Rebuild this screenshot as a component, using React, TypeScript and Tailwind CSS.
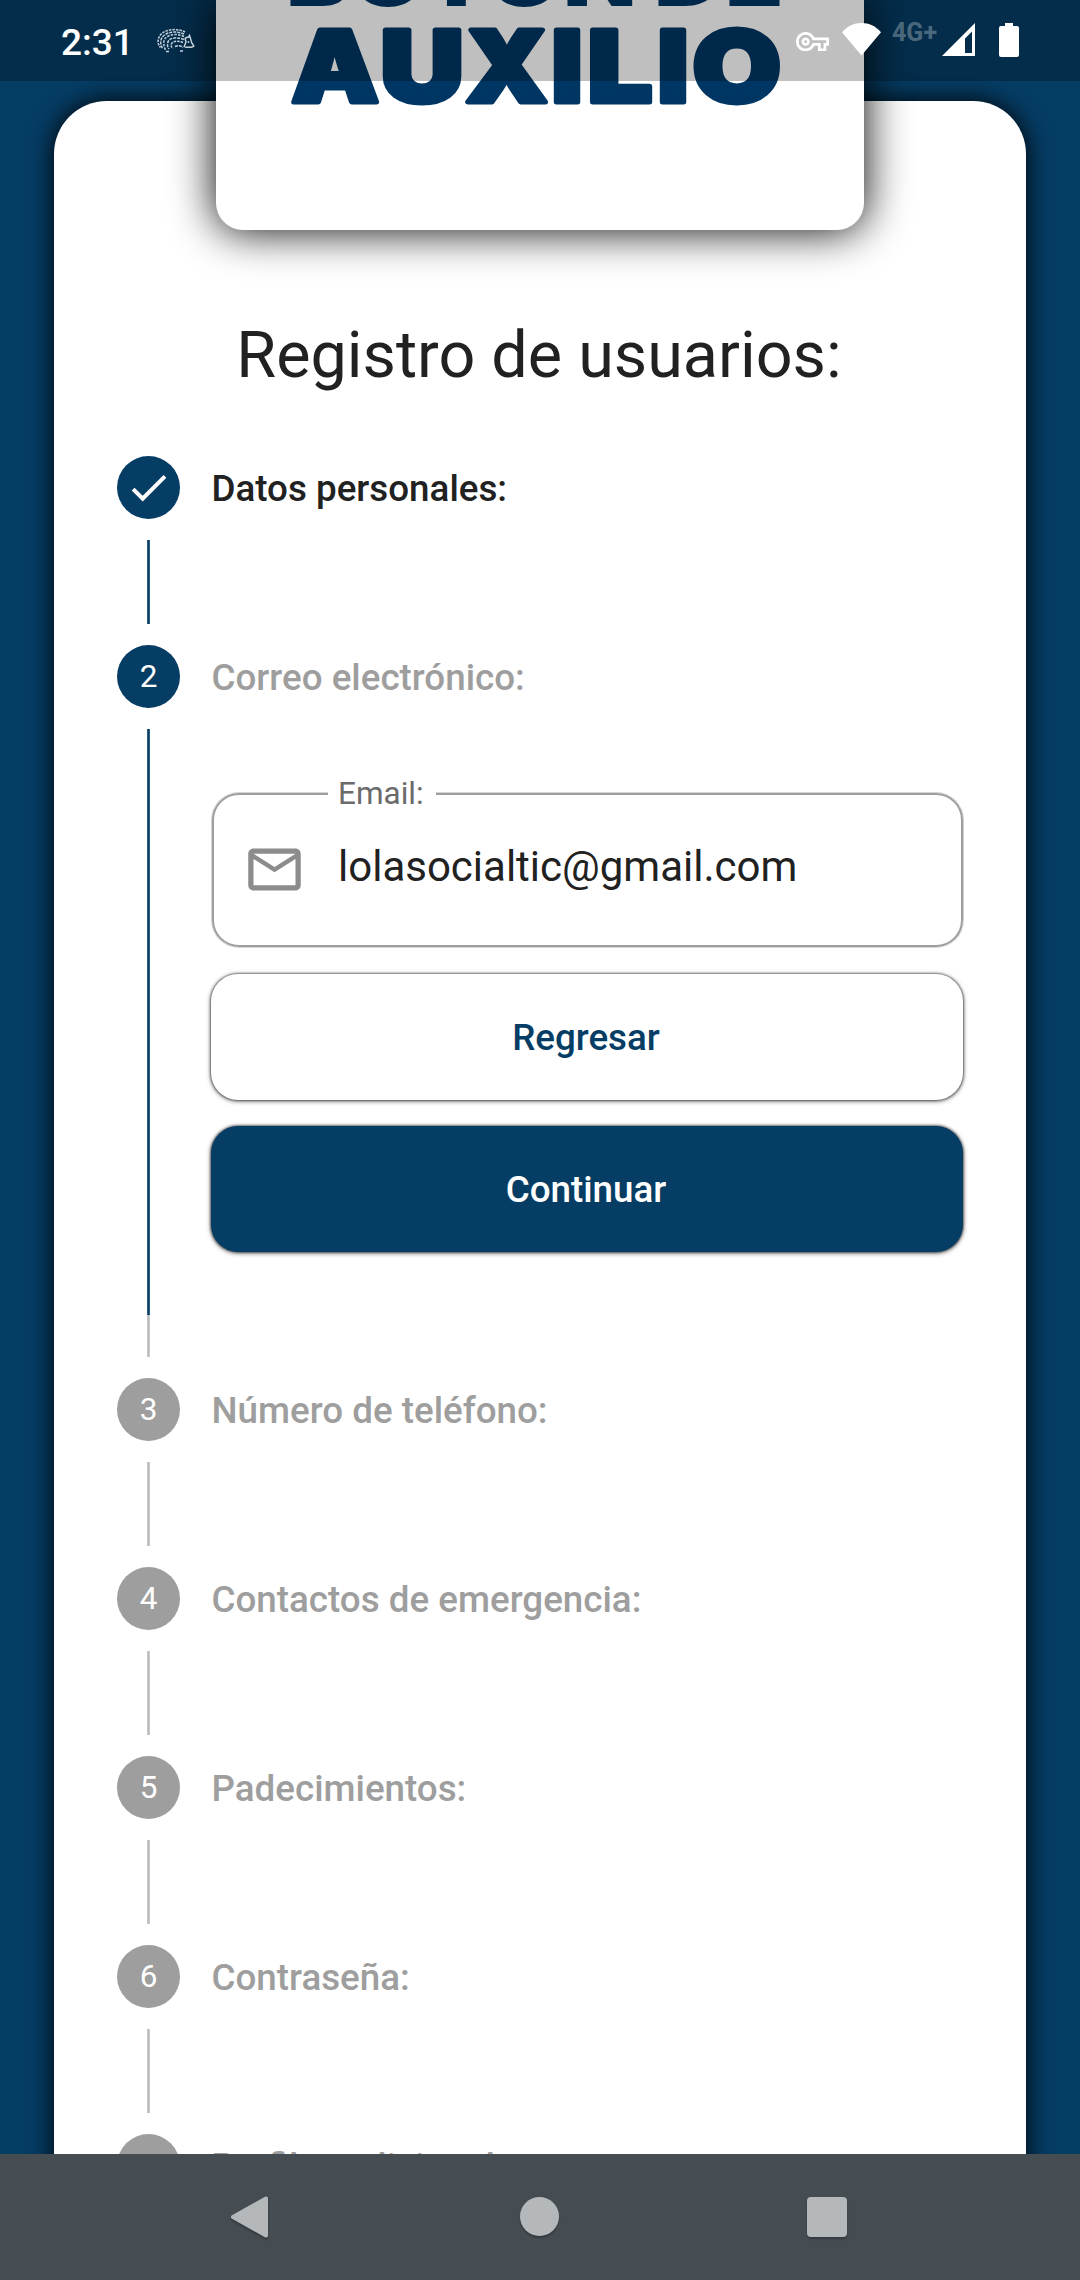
type StepState = "done" | "active" | "pending";

const steps: { n: number; label: string; state: StepState }[] = [
  { n: 1, label: "Datos personales:", state: "done" },
  { n: 2, label: "Correo electrónico:", state: "active" },
  { n: 3, label: "Número de teléfono:", state: "pending" },
  { n: 4, label: "Contactos de emergencia:", state: "pending" },
  { n: 5, label: "Padecimientos:", state: "pending" },
  { n: 6, label: "Contraseña:", state: "pending" },
  { n: 7, label: "Perfiles adicionales:", state: "pending" },
];

const topWord = [
  { ch: "B", x: 70, s: 1.1 },
  { ch: "O", x: 134, s: 1.13 },
  { ch: "T", x: 207.5, s: 1.1 },
  { ch: "Ó", x: 270.3, s: 1.13 },
  { ch: "N", x: 347, s: 1.1 },
  { ch: "D", x: 438, s: 1.1 },
  { ch: "E", x: 509, s: 1.1 },
];

const wordmark = [
  { ch: "A", x: 75.6, s: 1.11 },
  { ch: "U", x: 164.2, s: 1.17 },
  { ch: "X", x: 249.5, s: 1.056 },
  { ch: "I", x: 335.4, s: 1.078 },
  { ch: "L", x: 371.6, s: 1.16 },
  { ch: "I", x: 441.4, s: 1.078 },
  { ch: "O", x: 476.4, s: 1.153 },
];

function Logo() {
  return (
    <svg width="648" height="230" viewBox="0 0 648 230" className="block fill-[#003663] font-['Inter',sans-serif] font-black">
      {topWord.map((l, i) => (
        <text key={i} transform={`translate(${l.x} 6) scale(${l.s} 1)`} className="text-[87px]">
          {l.ch}
        </text>
      ))}
      {wordmark.map((l, i) => (
        <text
          key={i}
          transform={`translate(${l.x} 102) scale(${l.s} 1)`}
          strokeWidth="5"
          strokeLinejoin="round"
          className="stroke-[#003663] text-[99px]"
        >
          {l.ch}
        </text>
      ))}
    </svg>
  );
}

function Hedgehog() {
  return (
    <svg width="40" height="26" viewBox="0 0 40 26" fill="none" stroke="#c3d0da" strokeWidth="1.5">
      <path d="M29 4C24 1 13 .5 7 4.500 1.500 8.500 .5 15 4.500 19.500" strokeDasharray="2.500 1" />
      <path d="M28 6C22 3 13 3.500 8.500 7 4 10.500 3.500 16 7 21" strokeDasharray="3 1" />
      <path d="M28 8.500C22 5.500 14 6 10 9.500 7 12.500 7 17 10 23" strokeDasharray="2.500 1.200" />
      <path d="M28 11.500C22 9 16 9.500 13 12 11 14.500 11 19 13 21" strokeDasharray="3 1" />
      <path d="M27 14.500C22 12.500 18 13 16 15 14.500 17 15 19 17 20.500" strokeDasharray="2.500 1" />
      <path d="M19 18.500c3-1.500 6-1 8 1M10 23.500h4M24 23h4" strokeDasharray="3 1" />
      <path d="M29 10l3.500-1 1-1.500 1 3c.4 3 1.500 5.500 3.300 7.500-.5 1.500-4 1.500-9 1M29 10l1 4-2 5" />
      <circle cx="32.500" cy="14" r=".9" fill="#c3d0da" stroke="none" />
    </svg>
  );
}

function StatusBar() {
  return (
    <header className="absolute inset-x-0 top-0 z-20 flex h-[81px] items-start bg-black/25 text-white">
      <span className="ml-[61px] mt-[21px] w-[74px] text-[37px] leading-[43px] font-medium">2:31</span>
      <span className="ml-[21px] mt-7">
        <Hedgehog />
      </span>
      <svg className="ml-auto mt-[31.500px]" width="33" height="19.250" viewBox="0 5 24 14" fill="currentColor">
        <path d="M22 19h-6v-4h-2.680c-1.140 2.420-3.600 4-6.320 4-3.860 0-7-3.140-7-7s3.140-7 7-7c2.720 0 5.170 1.580 6.320 4H24v6h-2v4zm-4-2h2v-4h2v-2H11.940l-.23-.67C11.010 8.340 9.110 7 7 7c-2.760 0-5 2.240-5 5s2.240 5 5 5c2.110 0 4.010-1.340 4.710-3.330l.23-.67H18v4zM7 15c-1.650 0-3-1.350-3-3s1.350-3 3-3 3 1.350 3 3-1.350 3-3 3zm0-4c-.55 0-1 .45-1 1s.45 1 1 1 1-.45 1-1-.45-1-1-1z" />
      </svg>
      <svg className="ml-[13px] mt-[23px]" width="39" height="33" viewBox="0 0 39 33" fill="currentColor">
        <path d="M0 9.200C5.500 3 12 0 19.500 0S33.500 3 39 9.200L19.500 32.500z" />
      </svg>
      <span className="ml-[11px] mt-[19px] w-[46px] text-[25px] leading-7 font-bold text-white/30">4G+</span>
      <svg className="ml-1 mt-[23px]" width="33" height="33" viewBox="0 0 33 33" fill="currentColor">
        <path fillRule="evenodd" d="M33 0v33H0zM30 8.500 23 15.500V30h7z" />
      </svg>
      <svg className="ml-6 mr-[61px] mt-[23px]" width="20" height="34" viewBox="0 0 20 34" fill="currentColor">
        <path d="M6 0h8v3h4a2 2 0 0 1 2 2v27a2 2 0 0 1-2 2H2a2 2 0 0 1-2-2V5a2 2 0 0 1 2-2h4z" />
      </svg>
    </header>
  );
}

function EmailField() {
  return (
    <div className="relative ml-px flex h-[154px] items-center rounded-[27px] border-2 border-[#9e9e9e] pb-[2px] pl-[29px] shadow-[0_0_0_1px_#9e9e9e70]">
      <span className="absolute -top-5 left-[114px] flex h-[38px] w-[108px] items-center bg-white pl-2.5 text-[31.5px] text-[#6b6b6b]">
        Email:
      </span>
      <svg width="63" height="63" viewBox="0 0 24 24" fill="#8c8c8c">
        <path d="M22 6c0-1.100-.9-2-2-2H4c-1.100 0-2 .9-2 2v12c0 1.100.9 2 2 2h16c1.100 0 2-.9 2-2V6zm-2 0l-8 5-8-5h16zm0 12H4V8l8 5 8-5v10z" />
      </svg>
      <span className="-mt-[5px] ml-[32px] text-[42px] leading-[50px] text-[#212121]">lolasocialtic@gmail.com</span>
    </div>
  );
}

const buttonBase =
  "flex h-[126px] w-[752px] items-center justify-center rounded-[27px] pt-px pr-[2px] text-[36.75px] font-medium shadow-[0_1px_5px_rgba(0,0,0,0.6),0_0_2px_1px_rgba(0,0,0,0.4)]";

function Line({ active, className }: { active: boolean; className: string }) {
  return (
    <div
      className={`w-[3px] border-x ${active ? "border-[#2f5d80] bg-[#063d65]" : "border-[#c9c9c9] bg-[#b9b9b9]"} ${className}`}
    />
  );
}

function Step({ n, label, state }: { n: number; label: string; state: StepState }) {
  const filled = state !== "pending";
  return (
    <li className="flex">
      <div className="flex w-[63px] flex-col items-center">
        <div
          className={`flex size-[63px] items-center justify-center rounded-full text-[31.5px] text-white ${filled ? "bg-[#063d65]" : "bg-[#9e9e9e]"}`}
        >
          {state === "done" ? (
            <svg width="47.250" height="47.250" viewBox="0 0 24 24" fill="currentColor">
              <path d="M9 16.170 4.830 12l-1.420 1.410L9 19 21 7l-1.410-1.410z" />
            </svg>
          ) : (
            n
          )}
        </div>
        {state === "active" ? (
          <div className="my-[21px] flex flex-col">
            <Line active className="h-[586px]" />
            <Line active={false} className="h-[42px]" />
          </div>
        ) : (
          <Line active={state === "done"} className="my-[21px] h-[84px]" />
        )}
      </div>
      <div className="ml-[31px] w-[752px]">
        <div
          className={`flex h-[63px] items-center pt-[2px] pl-[0.5px] text-[36.75px] font-medium ${state === "done" ? "text-[#212121]" : "text-[#9e9e9e]"}`}
        >
          {label}
        </div>
        {state === "active" && (
          <div className="mt-[85px] flex flex-col">
            <EmailField />
            <button className={`${buttonBase} mt-[27px] bg-white text-[#063d65]`}>Regresar</button>
            <button className={`${buttonBase} mt-[26px] bg-[#063d65] text-white`}>Continuar</button>
          </div>
        )}
      </div>
    </li>
  );
}

function NavBar() {
  return (
    <nav className="flex h-[126px] items-start bg-[#454d53] pl-[230px] pt-[42px] text-[#b4b8ba]">
      <svg width="40" height="46" viewBox="0 0 40 46" className="drop-shadow-[0_2px_1px_rgba(0,0,0,0.25)]">
        <path d="M3 21 36 2.500V39.500z" fill="currentColor" stroke="currentColor" strokeWidth="4" strokeLinejoin="round" />
      </svg>
      <div className="ml-[250px] mt-[1px] size-[39px] rounded-full bg-current shadow-[0_2px_2px_rgba(0,0,0,0.25)]" />
      <div className="ml-[248px] mt-[1px] size-10 rounded-[4px] bg-current shadow-[0_2px_2px_rgba(0,0,0,0.25)]" />
    </nav>
  );
}

export default function App() {
  return (
    <div className="relative flex h-[2280px] w-[1080px] flex-col overflow-hidden bg-[#063d65] font-['Roboto',sans-serif]">
      <StatusBar />
      <div className="absolute left-[216px] top-0 z-10 h-[230px] w-[648px] rounded-b-[27px] bg-white shadow-[0_0_45px_#000]">
        <Logo />
      </div>
      <main className="h-[2154px] overflow-hidden px-[54px] pt-[101px]">
        <section className="h-[2300px] rounded-t-[53px] bg-white pt-[216px] shadow-[0_0_26px_#000]">
          <h1 className="pr-[2px] text-center text-[64.7px] leading-[76px] text-[#212121]">Registro de usuarios:</h1>
          <ol className="mt-[63px] flex flex-col pl-[63px]">
            {steps.map((s) => (
              <Step key={s.n} {...s} />
            ))}
          </ol>
        </section>
      </main>
      <NavBar />
    </div>
  );
}
